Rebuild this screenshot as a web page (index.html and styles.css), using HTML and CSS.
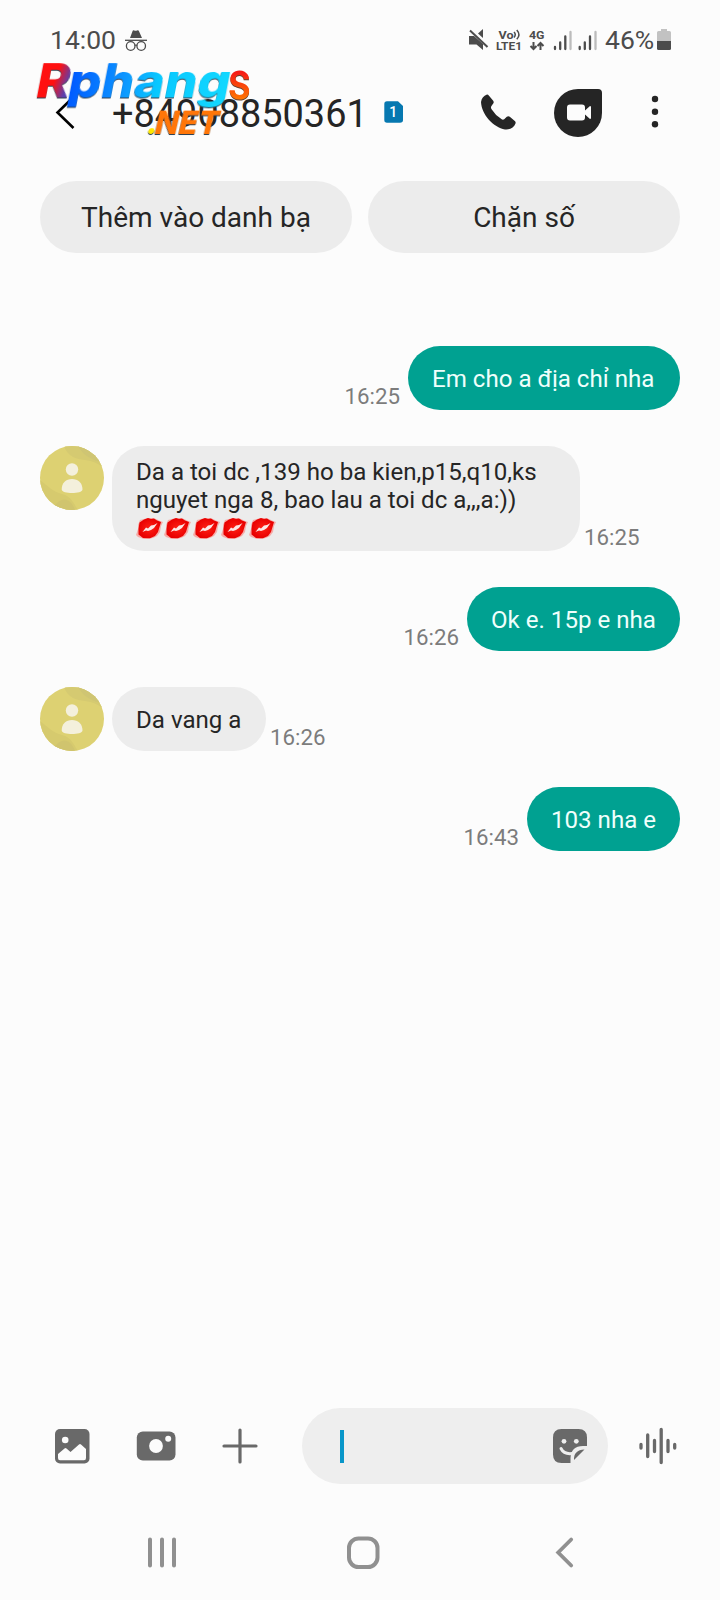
FILE: index.html
```html
<!DOCTYPE html>
<html lang="vi">
<head>
<meta charset="utf-8">
<title>+84908850361</title>
<link rel="stylesheet" href="styles.css">
</head>
<body>
<svg class="defs" width="0" height="0">
  <defs>
    <radialGradient id="lip"><stop offset="0" stop-color="#ff2015"/><stop offset="1" stop-color="#e80000"/></radialGradient>
    <symbol id="kiss" viewBox="0 0 28 24">
      <path d="M2 12 0 18 2 20 5 21 8 22 12 22 17 21 21 19 24 15 25 9 27 5 24 4 20 2 17 1 12 1 8 2 4 3 2 8Z" fill="#ff7770" opacity=".55"/>
      <path d="M2.500 12 3.500 5.500 8 2.500 12 1 15 2 18 1.500 21 3.500 25 5 23.500 10 22 15 19 19 14 21.300 7 21 2.500 17.500Z" fill="url(#lip)"/>
      <path d="M6.500 15 10 10.500 12 11.500 15 8.500 18 8 21.500 6 18 11 15 13 12 14 10 13.500Z" fill="#fbe9e7"/>
    </symbol>
    <symbol id="person" viewBox="0 0 64 64">
      <clipPath id="disc"><circle cx="32" cy="32" r="32"/></clipPath>
      <g clip-path="url(#disc)">
        <path d="M0 0H64V64H0Z" fill="#ddd172"/>
        <path d="M24 0C28 11 36 13 45 14 53 15 57 17 64 22V0Z" fill="#d5ca71"/>
        <path d="M38 0C44 11 53 14 64 17V0Z" fill="#cfc573"/>
        <path d="M0 34C8 40 13 46 22 48 31 50 34 58 38 64H0Z" fill="#d6ca6e"/>
        <path d="M18 56C24 51 31 53 35 64H10Z" fill="#d0c46e"/>
      </g>
      <circle cx="32" cy="23.500" r="6.200" fill="#f4f0dc"/>
      <path d="M21.700 43.500C21.700 37 26 33 32 33S42.500 37 42.500 43.500C42.500 46 37 47 32 47S21.700 46 21.700 43.500Z" fill="#f4f0dc"/>
    </symbol>
  </defs>
</svg>
<div class="phone">
  <div class="status">
    <span class="clock">14:00</span>
    <svg class="incognito" width="24" height="24" viewBox="0 0 24 24" fill="none" stroke="#4c4c4c">
      <path d="M5 9 7.500 2.200Q8 .8 9.300 1.500 10.500 2.100 12 1.500 13.500.8 14 2.200L17 9Z" fill="#4c4c4c" stroke="none"/>
      <path d="M0 11.300H22" stroke-width="1.300"/><circle cx="5.700" cy="17" r="4.300" stroke-width="1.300"/><circle cx="16.200" cy="17" r="4.300" stroke-width="1.300"/><path d="M9.700 16.500Q11 15.500 12.200 16.500" stroke-width="1.200"/>
    </svg>
    <svg class="system" width="132" height="26" viewBox="0 0 132 26">
      <path d="M9 4.500 14 0V9Z" fill="#4c4c4c"/>
      <path d="M0 7H5L14 15V21L7.500 15.500H0Z" fill="#4c4c4c"/>
      <path d="M1 1.500 18.500 18" stroke="#4c4c4c" stroke-width="2"/>
      <g class="tiny" fill="#4c4c4c"><text x="29.500" y="9.500" textLength="15" lengthAdjust="spacingAndGlyphs">Vo</text><text x="27" y="21" textLength="26" lengthAdjust="spacingAndGlyphs">LTE1</text><text x="60" y="9.500" textLength="15.500" lengthAdjust="spacingAndGlyphs">4G</text></g>
      <g fill="none" stroke="#4c4c4c" stroke-width="1.500"><path d="M45 3Q47.500 5.700 45 8.500M47.800 1Q52 5.700 47.800 10.300"/><path stroke-width="2" d="M64.500 13V20M61.500 17 64.500 20 67.500 17M71.500 21V14M68.500 17 71.500 14 74.500 17"/></g>
      <g stroke="#4c4c4c" stroke-width="2.300" stroke-linecap="round"><path d="M86 18V20M91.200 13.500V20M96.300 7.500V20M110.700 18V20M115.800 13.500V20M121 7.500V20"/><path stroke="#bcbcbc" d="M101.500 3V20M126.500 3V20"/></g>
    </svg>
    <span class="percent">46%</span>
    <svg class="battery" width="14" height="22" viewBox="0 0 14 22"><path d="M4 0H10V2H12.500Q14 2 14 3.500V12H0V3.500Q0 2 1.500 2H4Z" fill="#c2c2c2"/><path d="M0 12H14V19.500Q14 21 12.500 21H1.500Q0 21 0 19.500Z" fill="#4c4c4c"/></svg>
  </div>

  <header class="header">
    <svg class="back" width="22" height="36" viewBox="0 0 22 36"><path d="M18.500 3 2.500 18.500 18.500 34" fill="none" stroke="#000" stroke-width="2.600"/></svg>
    <h1 class="number">+84908850361</h1>
    <svg class="sim" width="20" height="22" viewBox="0 0 20 22"><path d="M3 .3H14L19 5V19Q19 21.800 16 21.800H3Q.3 21.800.3 19V3Q.3.3 3 .3Z" fill="#0778b0"/><text x="5.200" y="16.200">1</text></svg>
    <svg class="call" width="36" height="36" viewBox="0 0 36 36"><path d="M1 8C1.500 4 4 1.500 6.500.7Q7.800.3 9 1.700L13.200 6.800Q14.200 8.300 13.200 9.600L11.300 12.200Q10.600 13.700 11.600 15.200 15.500 21.500 21.700 25.300 23 26 24.200 25.200L26.800 22.700Q28.300 21.700 29.800 22.700L34.800 27Q36 28 35.500 29.400C34 33.500 29.500 36 25 35.400 13.500 33.500 1.500 20.500 1 8Z" fill="#252525"/></svg>
    <svg class="duo" width="48" height="48" viewBox="0 0 48 48"><path d="M24 0H44Q48 0 48 4V24A24 24 0 1 1 24 0Z" fill="#252525"/><path d="M16 15.500H28Q31 15.500 31 18.500V21.500L36 17Q37 17 37 18V29Q37 30 36 30L31 25.500V28.500Q31 31.500 28 31.500H16Q13 31.500 13 28.500V18.500Q13 15.500 16 15.500Z" fill="#fcfcfc"/></svg>
    <svg class="more" width="8" height="34" viewBox="0 0 8 34" fill="#252525"><circle cx="4" cy="4" r="3.200"/><circle cx="4" cy="16.700" r="3.200"/><circle cx="4" cy="29.200" r="3.200"/></svg>
    <svg class="watermark" width="224" height="84" viewBox="0 0 224 84">
      <defs>
        <linearGradient id="red" x2="1" y2=".3"><stop offset=".6" stop-color="#ff1010"/><stop offset="1" stop-color="#5940b0"/></linearGradient>
        <linearGradient id="blue"><stop offset="0" stop-color="#0058ff"/><stop offset=".35" stop-color="#0d98ff"/><stop offset=".55" stop-color="#08c8ff"/><stop offset="1" stop-color="#13d8ff"/></linearGradient>
        <linearGradient id="orange" x2="0" y2="1"><stop offset=".35" stop-color="#f51c16"/><stop offset=".8" stop-color="#ff7500"/></linearGradient>
      </defs>
      <g class="brand" transform="translate(0 40.500) skewX(-11)">
        <text x="2" y="0" textLength="34" lengthAdjust="spacingAndGlyphs" fill="url(#red)">R</text>
        <text x="34" y="0" textLength="162" lengthAdjust="spacingAndGlyphs" fill="url(#blue)">phang</text>
      </g>
      <text class="brand-s" x="196" y="42" textLength="23" lengthAdjust="spacingAndGlyphs" fill="url(#orange)">s</text>
      <g class="brand net" transform="translate(0 77) skewX(-13)"><text x="113" y="0" fill="#ffe800">.</text><text x="121" y="0" textLength="64" lengthAdjust="spacingAndGlyphs" fill="#ff7608">NET</text></g>
    </svg>
  </header>

  <div class="actions"><button class="pill">Thêm vào danh bạ</button><button class="pill">Chặn số</button></div>

  <main class="thread">
    <div class="row sent"><time class="time">16:25</time><p class="bubble w-a">Em cho a địa chỉ nha</p></div>
    <div class="row"><svg class="avatar" width="64" height="64"><use href="#person"/></svg>
      <p class="bubble long">Da a toi dc ,139 ho ba kien,p15,q10,ks<br>nguyet nga 8, bao lau a toi dc a,,,a:))<span class="kisses"><svg width="28" height="24"><use href="#kiss"/></svg><svg width="28" height="24"><use href="#kiss"/></svg><svg width="28" height="24"><use href="#kiss"/></svg><svg width="28" height="24"><use href="#kiss"/></svg><svg width="28" height="24"><use href="#kiss"/></svg></span></p><time class="time">16:25</time></div>
    <div class="row sent"><time class="time">16:26</time><p class="bubble w-b">Ok e. 15p e nha</p></div>
    <div class="row"><svg class="avatar" width="64" height="64"><use href="#person"/></svg><p class="bubble w-c">Da vang a</p><time class="time">16:26</time></div>
    <div class="row sent"><time class="time">16:43</time><p class="bubble w-d">103 nha e</p></div>
  </main>

  <footer class="composer">
    <svg class="gallery" width="36" height="36" viewBox="0 0 36 36"><rect x="1" y="1" width="34.500" height="34.500" rx="5" fill="#696969"/><circle cx="11.200" cy="12" r="3.300" fill="#fcfcfc"/><path d="M4 26 10.500 20.500Q11.500 19.500 12.500 20.500L16.500 24 25 16.400Q26 15.500 27 16.400L32 21V30Q32 32.200 30 32.200H6Q4 32.200 4 30Z" fill="#fcfcfc"/></svg>
    <svg class="camera" width="40" height="30" viewBox="0 0 40 30"><rect x=".8" y=".5" width="38.700" height="29" rx="6" fill="#696969"/><circle cx="20" cy="15" r="6.900" fill="#fcfcfc"/><circle cx="32.200" cy="7.700" r="3" fill="#fcfcfc"/></svg>
    <svg class="plus" width="36" height="36" viewBox="0 0 36 36"><path d="M18 2V34M2 18H34" stroke="#696969" stroke-width="3.200" stroke-linecap="round"/></svg>
    <div class="field"><span class="caret"></span>
      <svg class="sticker" width="36" height="36" viewBox="0 0 36 36"><path d="M9.500 1H26.500Q35 1 35 9.500V18H31Q19 18 18.500 30V35H9.500Q1 35 1 26.500V9.500Q1 1 9.500 1Z" fill="#696969"/><path d="M32.500 21.500 22 32Q21.500 22 32.500 21.500Z" fill="#696969"/><circle cx="12" cy="13.300" r="2.400" fill="#eee"/><circle cx="24.300" cy="13.300" r="2.400" fill="#eee"/><path d="M9 20.500Q12 26.500 20 25.500" fill="none" stroke="#eee" stroke-width="3" stroke-linecap="round"/></svg>
    </div>
    <svg class="voice" width="38" height="38" viewBox="0 0 38 38"><path d="M2 17.500V21M8.700 8V29.500M15.500 13.500V24.500M22.200 2.500V35.500M29 13.500V24.500M35.700 17.500V21" stroke="#696969" stroke-width="3.300" stroke-linecap="round"/></svg>
  </footer>

  <nav class="nav">
    <svg width="32" height="34" viewBox="0 0 32 34"><path d="M4 4.500V30.500M16 4.500V30.500M28 4.500V30.500" stroke="#909090" stroke-width="4" stroke-linecap="round"/></svg>
    <svg width="34" height="34" viewBox="0 0 34 34"><rect x="3" y="3.500" width="28.500" height="28.500" rx="9.500" fill="none" stroke="#909090" stroke-width="4"/></svg>
    <svg width="20" height="34" viewBox="0 0 20 34"><path d="M16.200 4.500 3.200 17.500 16.200 30.500" fill="none" stroke="#909090" stroke-width="3.800" stroke-linecap="round"/></svg>
  </nav>
</div>
</body>
</html>
```
FILE: styles.css
```css
* { box-sizing: border-box; }
body { margin: 0; background: #fcfcfc; color: #252525; font-family: Roboto, "Noto Sans", sans-serif; }
svg { display: block; flex-shrink: 0; }
.defs { position: absolute; }
.phone { width: 720px; height: 1600px; display: flex; flex-direction: column; }

.status { height: 80px; display: flex; align-items: flex-start; padding: 29px 40px 0 50px; color: #4c4c4c; font-size: 26.5px; line-height: 24px; white-space: nowrap; }
.clock, .percent { margin-top: -1px; }
.clock { width: 75px; }
.system { margin-left: 320px; }
.tiny { font: 700 11.5px Roboto, sans-serif; }
.percent { margin-left: 4px; width: 52px; }

.header { position: relative; height: 64px; display: flex; align-items: center; padding-left: 55px; }
.number { margin: 4px 0 0 35px; width: 272px; font-size: 37.9px; line-height: 44px; font-weight: 400; white-space: nowrap; }
.sim text { fill: #fff; font: 500 14px Roboto, sans-serif; }
.call { margin-left: 76px; }
.duo { margin: 1px 0 0 38px; }
.more { margin-left: 49px; }
.watermark { position: absolute; left: 32px; top: -23px; overflow: visible; }
.brand { font: 800 47px Inter, sans-serif; filter: drop-shadow(0 1px 0 #304050); }
.brand-s { font: 500 51px Roboto, sans-serif; filter: drop-shadow(0 1px 0 #604030); }
.net { font-size: 32px; }

.actions { display: flex; gap: 16px; padding: 37px 40px 0; }
.pill { flex: 1; height: 72px; border: 0; border-radius: 36px; padding: 0; background: #ececec; color: #252525; font: 28px Roboto, sans-serif; }

.thread { flex: 1; display: flex; flex-direction: column; gap: 36px; padding: 93px 40px 0; }
.row { display: flex; align-items: flex-end; }
.sent { justify-content: flex-end; }
.avatar { align-self: flex-start; margin-right: 8px; }
.bubble { margin: 0; min-height: 64px; border-radius: 32px; padding: 19px 0 17px 24px; background: #ececec; font-size: 24.1px; line-height: 28px; white-space: nowrap; }
.long { width: 468px; height: 105px; padding-top: 12px; }
.kisses { display: flex; gap: .3px; margin-top: 3px; }
.sent .bubble { background: #00a191; color: #effffc; }
.w-a { width: 272px; }
.w-b { width: 213px; }
.w-c { width: 154px; }
.w-d { width: 153px; }
.time { color: #7c7c7c; font-size: 22.3px; line-height: 26px; margin: 0 0 1px 4px; }
.sent .time { margin-right: 8px; }

.composer { display: flex; align-items: center; height: 76px; padding-left: 54px; }
.camera { margin-left: 46px; }
.plus { margin-left: 46px; }
.field { margin-left: 44px; width: 306px; height: 76px; border-radius: 38px; background: #eee; display: flex; align-items: center; padding: 0 20px 0 38px; justify-content: space-between; }
.caret { width: 3.5px; height: 33px; background: #0896c9; }
.voice { margin-left: 31px; }

.nav { height: 116px; display: grid; grid-template-columns: 200px 209px 20px; align-items: start; padding: 51px 0 0 146px; }
```
